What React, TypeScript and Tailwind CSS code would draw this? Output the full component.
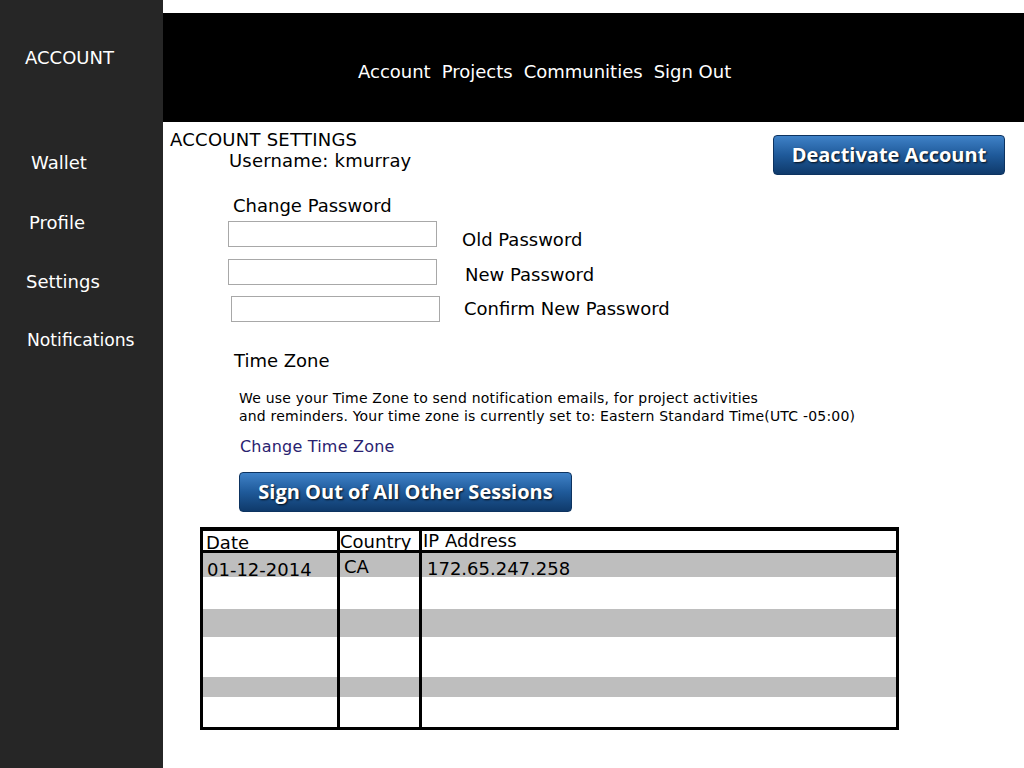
import React from "react";

const sideItems = [
  { label: "Wallet", className: "mt-[85px] pl-[31px]" },
  { label: "Profile", className: "mt-[40px] pl-[29px]" },
  { label: "Settings", className: "mt-[39px] pl-[26px]" },
  { label: "Notifications", className: "mt-[38px] pl-[27px] text-[17.2px]" },
];

const navLinks = ["Account", "Projects", "Communities", "Sign Out"];

// irregular row heights and fills copied from the mockup
const sessionRows = [
  { h: "h-[24px]", bg: "bg-[#bebebe]", date: "01-12-2014", country: "CA", ip: "172.65.247.258" },
  { h: "h-[32px]", bg: "bg-white" },
  { h: "h-[28px]", bg: "bg-[#bebebe]" },
  { h: "h-[40px]", bg: "bg-white" },
  { h: "h-[20px]", bg: "bg-[#bebebe]" },
  { h: "h-[30px]", bg: "bg-white" },
];

const BlueButton: React.FC<{ label: string; className?: string }> = ({ label, className }) => (
  <button
    type="button"
    className={`h-[40px] rounded-[4px] border border-[#0d3360] bg-gradient-to-b from-[#3f82c8] via-[#1f5a9a] to-[#0f3a6b] text-white font-bold text-[20px] [text-shadow:1px_1px_2px_rgba(0,0,0,0.85)] ${className ?? ""}`}
    style={{ fontFamily: "'Open Sans', Lato, sans-serif" }}
  >
    {label}
  </button>
);

const PasswordRow: React.FC<{ label: string; inputMl: string; labelMl: string; labelMt: string; top: string }> = ({
  label,
  inputMl,
  labelMl,
  labelMt,
  top,
}) => (
  <div className={`flex items-start h-[26px] ${top}`}>
    <input
      type="password"
      className={`w-[209px] h-[26px] border border-[#a8a8a8] bg-white ${inputMl}`}
    />
    <span className={`text-[18px] leading-[20px] whitespace-nowrap ${labelMl} ${labelMt}`}>{label}</span>
  </div>
);

export default function App() {
  return (
    <div
      className="flex w-[1024px] h-[768px] bg-white text-black overflow-hidden"
      style={{ fontFamily: "'DejaVu Sans', Verdana, sans-serif" }}
    >
      {/* Sidebar */}
      <aside className="w-[163px] shrink-0 h-full bg-[#262626] text-white flex flex-col text-[18px] leading-[20px]">
        <div className="mt-[48px] pl-[25px]">ACCOUNT</div>
        {sideItems.map((item) => (
          <div key={item.label} className={item.className}>
            {item.label}
          </div>
        ))}
      </aside>

      {/* Main */}
      <main className="flex-1 flex flex-col">
        <header className="mt-[13px] h-[109px] bg-black text-white">
          <nav className="flex gap-[11px] pl-[195px] pt-[49px] text-[18px] leading-[20px]">
            {navLinks.map((link) => (
              <span key={link}>{link}</span>
            ))}
          </nav>
        </header>

        <div className="flex items-start justify-between">
          <div className="flex flex-col">
            <h1 className="mt-[8px] ml-[7px] text-[18px] leading-[20px] font-normal tracking-[0.25px]">
              ACCOUNT SETTINGS
            </h1>
            <div className="mt-[1px] ml-[66px] text-[18px] leading-[20px] tracking-[0.2px]">Username: kmurray</div>
          </div>
          <BlueButton label="Deactivate Account" className="mt-[13px] mr-[19px] w-[232px]" />
        </div>

        <div className="mt-[21px] ml-[70px] text-[18px] leading-[20px]">Change Password</div>

        <PasswordRow label="Old Password" top="mt-[5px]" inputMl="ml-[65px]" labelMl="ml-[25px]" labelMt="mt-[9px]" />
        <PasswordRow label="New Password" top="mt-[12px]" inputMl="ml-[65px]" labelMl="ml-[28px]" labelMt="mt-[6px]" />
        <PasswordRow label="Confirm New Password" top="mt-[11px]" inputMl="ml-[68px]" labelMl="ml-[24px]" labelMt="mt-[3px]" />

        <div className="mt-[29px] ml-[71px] text-[18px] leading-[20px]">Time Zone</div>
        <p className="mt-[18px] ml-[76px] text-[14px] leading-[18px] tracking-[0.2px] whitespace-nowrap">
          We use your Time Zone to send notification emails, for project activities
          <br />
          and reminders. Your time zone is currently set to: Eastern Standard Time(UTC -05:00)
        </p>
        <a href="#" className="mt-[12px] ml-[77px] self-start text-[16px] leading-[20px] tracking-[0.2px] text-[#2a2270]">
          Change Time Zone
        </a>

        <BlueButton label="Sign Out of All Other Sessions" className="mt-[15px] ml-[76px] w-[333px]" />

        {/* Sessions table */}
        <div className="mt-[15px] ml-[37px] w-[699px] border-t-4 border-x-[3px] border-b-[3px] border-black text-[18px]">
          <div className="flex h-[22px] border-b-[3px] border-black bg-white leading-[20px]">
            <div className="w-[137px] border-r-[3px] border-black pl-[3px] pt-[2px]">Date</div>
            <div className="w-[82px] border-r-[3px] border-black pt-[1px] whitespace-nowrap">Country</div>
            <div className="flex-1 pl-[1px]">IP Address</div>
          </div>
          {sessionRows.map((row, i) => (
            <div key={i} className={`flex ${row.h} ${row.bg} leading-[20px]`}>
              <div className="w-[137px] border-r-[3px] border-black pl-[4px] pt-[7px]">{row.date}</div>
              <div className="w-[82px] border-r-[3px] border-black pl-[4px] pt-[4px]">{row.country}</div>
              <div className="flex-1 pl-[5px] pt-[6px]">{row.ip}</div>
            </div>
          ))}
        </div>
      </main>
    </div>
  );
}
